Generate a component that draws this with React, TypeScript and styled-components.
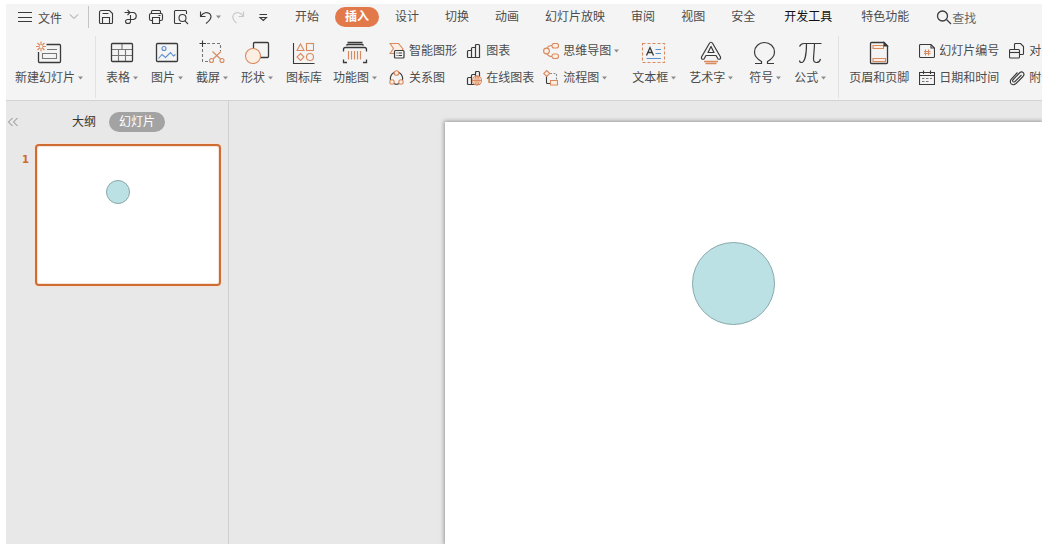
import React, { ReactNode } from "react";
import styled, { createGlobalStyle, css } from "styled-components";

const INK = "#3a3a3a";
const ORANGE = "#d98a5f";
const BLUE = "#5b8fd0";
const LIGHT = "#fdeee4";

const GlobalStyle = createGlobalStyle`
  * { box-sizing: border-box; }
  body {
    margin: 0;
    background: #ffffff;
    font-family: "Liberation Sans", "Noto Sans CJK SC", sans-serif;
    font-size: 12px;
    color: #4c4c4c;
    overflow: hidden;
  }
  button {
    border: 0;
    padding: 0;
    background: none;
    font: inherit;
    color: inherit;
    white-space: nowrap;
    cursor: pointer;
  }
  svg { display: block; flex: none; }
`;

const Shell = styled.div`
  display: flex;
  flex-direction: column;
  height: 100vh;
  padding: 4px 0 0 6px;
  overflow: hidden;
`;

const Header = styled.header`
  flex: none;
  height: 97px;
  background: #f4f4f4;
  border-bottom: 1px solid #d2d2d2;
  overflow: hidden;
`;

const MenuBar = styled.nav`
  display: flex;
  align-items: center;
  height: 26px;
  padding-left: 11px;
`;

const FileButton = styled.button`
  display: flex;
  align-items: center;
  gap: 5px;
  padding-right: 9px;
  border-right: 1px solid #c4c4c4;
  height: 22px;
  flex: none;

  svg:last-child { margin-left: 2px; }
`;

const QuickAccess = styled.div`
  display: flex;
  align-items: center;
  gap: 9px;
  margin-left: 9px;
  flex: none;
`;

const QuickButton = styled.button<{ $withCaret?: boolean }>`
  display: flex;
  align-items: center;
  justify-content: space-between;
  width: ${(p) => (p.$withCaret ? "23px" : "16px")};
  height: 20px;
`;

const TabList = styled.div`
  display: flex;
  align-items: center;
  margin-left: 11px;
  flex: none;
`;

const Tab = styled.button<{ $active?: boolean; $apart?: boolean; $strong?: boolean }>`
  height: 20px;
  line-height: 21px;
  padding: 0 13px;
  flex: none;
  margin-left: ${(p) => (p.$apart ? "3px" : "0")};
  ${(p) => p.$strong && css`color: #111111;`}
  ${(p) =>
    p.$active &&
    css`
      margin: 0 3px;
      padding: 0 10px;
      border-radius: 10px;
      background: #e2794a;
      color: #ffffff;
      font-weight: 700;
    `}
`;

const SearchButton = styled.button`
  display: flex;
  align-items: center;
  margin-left: 14px;
  flex: none;
  color: #666666;
`;

const Ribbon = styled.div`
  display: flex;
  align-items: flex-start;
  height: 70px;
  padding-left: 9px;
`;

const Group = styled.div<{ $gap: number; $before?: number }>`
  display: flex;
  align-items: flex-start;
  flex: none;
  gap: ${(p) => p.$gap}px;
  margin-left: ${(p) => p.$before ?? 0}px;
  padding-top: 10px;
`;

const Divider = styled.span`
  flex: none;
  width: 1px;
  height: 62px;
  margin: 6px 10px 0 12px;
  background: #e2e2e2;
`;

const LargeButton = styled.button`
  display: flex;
  flex-direction: column;
  align-items: center;
  gap: 3px;
  flex: none;
`;

const Label = styled.span`
  display: flex;
  align-items: center;
  gap: 3px;
  line-height: 18px;
`;

const SmallColumn = styled.div`
  display: flex;
  flex-direction: column;
  align-items: flex-start;
  gap: 6px;
  flex: none;
`;

const SmallButton = styled.button`
  display: flex;
  align-items: center;
  gap: 4px;
  height: 21px;
`;

const Workspace = styled.main`
  display: flex;
  flex: 1;
  min-height: 0;
  background: #e8e8e8;
`;

const Sidebar = styled.aside`
  flex: none;
  width: 223px;
  border-right: 1px solid #cfcfcf;
`;

const SidebarHead = styled.div`
  display: flex;
  align-items: center;
  height: 20px;
  margin-top: 11px;
`;

const CollapseButton = styled.button`
  width: 14px;
  margin-right: 42px;
  display: flex;
`;

const PaneTab = styled.button<{ $active?: boolean }>`
  height: 20px;
  line-height: 20px;
  padding: 0 10px;
  color: ${(p) => (p.$active ? "#ffffff" : "#333333")};
  background: ${(p) => (p.$active ? "#a3a3a3" : "transparent")};
  border-radius: 10px;
  margin-right: 3px;
`;

const SlideRow = styled.div`
  display: flex;
  align-items: flex-start;
  margin-top: 12px;
  padding: 0 7px 0 16px;
`;

const SlideNumber = styled.span`
  width: 13px;
  margin-top: 9px;
  line-height: 14px;
  font-family: "DejaVu Sans", sans-serif;
  font-size: 10px;
  font-weight: 700;
  color: #cc6b2c;
`;

const Thumbnail = styled.button`
  position: relative;
  flex: 1;
  height: 142px;
  background: #ffffff;
  border: 2px solid #cf6c33;
  border-radius: 4px;
  box-shadow: 0 0 1px 1px #f6e3d6, inset 0 0 1px 1px #f6e3d6;
`;

const Canvas = styled.section`
  flex: 1;
  min-width: 0;
  display: flex;
  padding: 21px 0 0 216px;
  overflow: hidden;
`;

const Slide = styled.div`
  position: relative;
  flex: 1;
  background: #ffffff;
  box-shadow: 0 0 4px 1px #999999;
`;

const Disc = styled.span<{ $size: number; $left: number; $top: number }>`
  position: absolute;
  left: ${(p) => p.$left}px;
  top: ${(p) => p.$top}px;
  width: ${(p) => p.$size}px;
  height: ${(p) => p.$size}px;
  border: 1px solid #87a9ab;
  border-radius: 50%;
  background: #bce1e4;
`;

type Art = { children: ReactNode };

const BigIcon = ({ children }: Art) => (
  <svg width="28" height="26" viewBox="0 0 28 26" fill="none" stroke={INK} strokeWidth="1.1" aria-hidden="true">
    {children}
  </svg>
);

const Icon = ({ children }: Art) => (
  <svg width="16" height="16" viewBox="0 0 16 16" fill="none" stroke={INK} strokeWidth="1.1" aria-hidden="true">
    {children}
  </svg>
);

const Caret = () => (
  <svg width="5" height="4" viewBox="0 0 5 4" aria-hidden="true">
    <path d="M0 0.5H5L2.5 3.5Z" fill="#8c8c8c" />
  </svg>
);

const Large = ({ label, caret, children }: { label: string; caret?: boolean; children: ReactNode }) => (
  <LargeButton type="button">
    <BigIcon>{children}</BigIcon>
    <Label>
      {label}
      {caret && <Caret />}
    </Label>
  </LargeButton>
);

const Small = ({ label, caret, children }: { label: string; caret?: boolean; children: ReactNode }) => (
  <SmallButton type="button">
    <Icon>{children}</Icon>
    <Label>
      {label}
      {caret && <Caret />}
    </Label>
  </SmallButton>
);

const Bars = () => (
  <path
    strokeWidth="1.2"
    d="M1.500 14.500V8.500Q1.500 7.500 2.500 7.500H5.500M5.500 14.500V5.500Q5.500 4.500 6.500 4.500H9.500M9.500 14.500V2.500Q9.500 1.500 10.500 1.500H12.500Q13.500 1.500 13.500 2.500V14.500ZM1.500 14.500H9.500"
  />
);

const tabs: { name: string; active?: boolean; apart?: boolean; strong?: boolean }[] = [
  { name: "开始" },
  { name: "插入", active: true },
  { name: "设计" },
  { name: "切换" },
  { name: "动画" },
  { name: "幻灯片放映" },
  { name: "审阅" },
  { name: "视图" },
  { name: "安全" },
  { name: "开发工具", apart: true, strong: true },
  { name: "特色功能", apart: true },
];

export default function App() {
  return (
    <Shell>
      <GlobalStyle />
      <Header>
        <MenuBar>
          <FileButton type="button">
            <Icon>
              <path d="M1 3.500H15M1 8.500H15M1 12.500H15" />
            </Icon>
            文件
            <svg width="10" height="6" viewBox="0 0 10 6" fill="none" stroke="#999" aria-hidden="true">
              <path d="M1 0.500L5 4.500L9 0.500" />
            </svg>
          </FileButton>

          <QuickAccess>
            <QuickButton type="button" aria-label="保存">
              <Icon>
                <path d="M1.500 3.500Q1.500 1.500 3.500 1.500H11.500L14.500 4.500V13.500Q14.500 14.500 13.500 14.500H2.500Q1.500 14.500 1.500 13.500ZM4.500 14V8.500H11.500V14M4.500 4.500H10.500" />
              </Icon>
            </QuickButton>
            <QuickButton type="button" aria-label="输出">
              <Icon>
                <path d="M1.500 3.500H10.500A3.600 3.600 0 0 1 10.500 10.500H7.500M4.500 1L7 3.500L4.500 6M7.500 6V12.500Q7.500 14.500 5 14.500Q2.500 14.500 2.500 12.500Q2.500 10.500 5 10.500H7.500" />
              </Icon>
            </QuickButton>
            <QuickButton type="button" aria-label="打印">
              <Icon>
                <path d="M3.500 4V2.500Q3.500 1.500 4.500 1.500H11.500Q12.500 1.500 12.500 2.500V4M4.500 11.500H3Q1.500 11.500 1.500 10V6Q1.500 4.500 3 4.500H13Q14.500 4.500 14.500 6V10Q14.500 11.500 13 11.500H11.500M4.500 8.500H11.500V14.500H4.500ZM10.500 6.500H12.500" />
              </Icon>
            </QuickButton>
            <QuickButton type="button" aria-label="打印预览">
              <Icon>
                <path d="M13.500 5V2.500Q13.500 1.500 12.500 1.500H2.500Q1.500 1.500 1.500 2.500V13.500Q1.500 14.500 2.500 14.500H8M12 11.800L15 15" />
                <circle cx="9.500" cy="9" r="3.500" />
              </Icon>
            </QuickButton>
            <QuickButton type="button" aria-label="撤销" $withCaret>
              <Icon>
                <path d="M2.500 2.500V7.500H7.500M2.500 7.500C5 3.500 9.500 2.500 12 5C14.500 8 12 11.500 8 14.500" />
              </Icon>
              <Caret />
            </QuickButton>
            <QuickButton type="button" aria-label="恢复">
              <Icon>
                <path stroke="#c8c8c8" d="M13.500 2.500V7.500H8.500M13.500 7.500C11 3.500 6.500 2.500 4 5C1.500 8 3.500 11.500 6.500 14" />
              </Icon>
            </QuickButton>
            <QuickButton type="button" aria-label="自定义快速访问">
              <Icon>
                <path d="M4.500 5.500H12M5 8.500L8.300 11.500L11.500 8.500Z" />
              </Icon>
            </QuickButton>
          </QuickAccess>

          <TabList>
            {tabs.map((t) => (
              <Tab key={t.name} type="button" $active={t.active} $apart={t.apart} $strong={t.strong}>
                {t.name}
              </Tab>
            ))}
          </TabList>

          <SearchButton type="button">
            <Icon>
              <circle cx="6.500" cy="7" r="5" strokeWidth="1.300" />
              <path d="M10.500 10.500L15 15" strokeWidth="1.300" />
            </Icon>
            查找
          </SearchButton>
        </MenuBar>

        <Ribbon>
          <Group $gap={0}>
            <Large label="新建幻灯片" caret>
              <path strokeWidth="1.300" d="M11.500 4.500H24.500Q25.500 4.500 25.500 5.500V21.500Q25.500 22.500 24.500 22.500H4.500Q3.500 22.500 3.500 21.500V12" />
              <path stroke="#777" d="M12 9.500H22M7.500 13.500H21.500V18.500H7.500Z" />
              <path stroke={ORANGE} d="M6 1.500V5M6 8V11.500M1 6.500H4.500M7.500 6.500H11M2.500 3L5 5.500M7 7.500L9.500 10M9.500 3L7 5.500M5 7.500L2.500 10" />
            </Large>
          </Group>

          <Divider />

          <Group $gap={13}>
            <Large label="表格" caret>
              <path stroke="#777" d="M4 9.500H24M4 15.500H24M10.500 9.500V15.500M17.500 9.500V21.500M14 4V9.500M10.500 15.500V21.500" />
              <rect x="3.500" y="3.500" width="21" height="18" rx="1" strokeWidth="1.300" />
            </Large>
            <Large label="图片" caret>
              <rect x="3.500" y="3.500" width="21" height="18" rx="1" strokeWidth="1.300" />
              <circle cx="11" cy="8.500" r="2" stroke={BLUE} />
              <path stroke={BLUE} d="M5.500 18.500L9 14.500L12.500 17.500L17.500 12.500L20.500 16L22.500 14.500" />
            </Large>
            <Large label="截屏" caret>
              <path stroke="#777" strokeDasharray="3 2" d="M9 3.500H22.500V11M4.500 9V21.500H11" />
              <path d="M4.500 0.500V7M1.500 3.500H8" />
              <g stroke={ORANGE}>
                <circle cx="13.500" cy="20.500" r="2" />
                <circle cx="24" cy="20.500" r="2" />
                <path d="M15 19L23 11.500M22.500 19L14.500 11.500" />
              </g>
            </Large>
            <Large label="形状" caret>
              <rect x="10.500" y="2.500" width="15" height="15" rx="1" strokeWidth="1.300" />
              <circle cx="10" cy="16" r="7.500" stroke={ORANGE} fill={LIGHT} />
            </Large>
            <Large label="图标库">
              <path d="M3.500 3V23.500H24.500" />
              <g stroke={ORANGE}>
                <path d="M10.500 4L14 10.500H7ZM10.500 13.500L14 17L10.500 20.500L7 17Z" />
                <rect x="16.500" y="3.500" width="7" height="7" />
                <circle cx="20" cy="17" r="3.500" />
              </g>
            </Large>
          </Group>

          <Group $gap={12} $before={11}>
            <Large label="功能图" caret>
              <path
                strokeWidth="1.300"
                d="M6.500 2.500H21.500M5.500 5.500Q6 4.500 7 4.500H21Q22 4.500 22.500 5.500M2.500 11.500V9.500Q2.500 7.500 4.500 7.500H23.500Q25.500 7.500 25.500 9.500V11.500M2.500 19.500V22.500H6M25.500 19.500V22.500H22"
              />
              <path
                stroke={ORANGE}
                strokeWidth="1.200"
                d="M7.500 11V19.500M10.500 11V19.500M13.500 11V19.500M16.500 11V19.500M19.500 11V19.500"
              />
            </Large>
            <SmallColumn>
              <Small label="智能图形">
                <path stroke={ORANGE} fill={LIGHT} d="M1 0.500H9.500L14 6L10 10.500H1L4.500 5.500Z" />
                <rect x="5.500" y="7.500" width="9.500" height="7.500" rx="1" fill="#f4f4f4" strokeWidth="1.200" />
                <path d="M7.500 10H8.500M9.500 10H13M7.500 12.500H8.500M9.500 12.500H13" />
              </Small>
              <Small label="关系图">
                <path d="M5 2.500C2.500 4 1 7 1.500 10M10 2.500C12.500 4 14 7 13.500 10M5 13.500Q7.500 15 10 13.500" />
                <g stroke={ORANGE} fill={LIGHT}>
                  <circle cx="7.500" cy="3" r="2.300" />
                  <circle cx="3" cy="12" r="2.200" />
                  <circle cx="12" cy="12" r="2.200" />
                </g>
              </Small>
            </SmallColumn>
          </Group>

          <Group $gap={9} $before={9}>
            <SmallColumn>
              <Small label="图表">
                <Bars />
              </Small>
              <Small label="在线图表">
                <Bars />
                <g stroke={ORANGE}>
                  <circle cx="11" cy="10.500" r="4.500" fill={LIGHT} />
                  <path d="M6.500 10.500H15.500M11 6V15" />
                  <ellipse cx="11" cy="10.500" rx="2" ry="4.500" />
                </g>
              </Small>
            </SmallColumn>
            <SmallColumn>
              <Small label="思维导图" caret>
                <g stroke={ORANGE}>
                  <path d="M4 5.500Q5 2.500 9 2.500M4 10.500Q5 13.500 9 13.500" />
                  <circle cx="3.500" cy="8" r="2.900" fill={LIGHT} />
                  <rect x="9" y="0.500" width="6.500" height="4.500" rx="2" fill={LIGHT} />
                  <rect x="9" y="11" width="6.500" height="4.500" rx="2" fill={LIGHT} />
                </g>
              </Small>
              <Small label="流程图" caret>
                <path d="M3.500 6V12.500Q3.500 13.500 4.500 13.500H7" />
                <path stroke="#888" strokeDasharray="2 1.500" d="M7 3.500H13.500V10" />
                <path stroke={ORANGE} fill={LIGHT} d="M3.700 0.500L6.700 3.500L3.700 6.500L0.700 3.500ZM7.500 10.500H14.500V15H7.500Z" />
              </Small>
            </SmallColumn>
          </Group>

          <Group $gap={13} $before={13}>
            <Large label="文本框" caret>
              <rect x="2.500" y="3.500" width="22" height="19" stroke={ORANGE} strokeDasharray="3 2" />
              <path strokeWidth="1.300" d="M6.500 15.500L10 7.500L13.500 15.500M7.700 12.500H12.300" />
              <path stroke={BLUE} d="M15.500 9.500H21M15.500 13.500H21M6.500 18.500H21" />
            </Large>
            <Large label="艺术字" caret>
              <path
                strokeLinejoin="round"
                strokeWidth="1.200"
                d="M12 4Q14 0.500 16 4L23.500 17Q24 20 21 19L19 15.500H9L7 19Q4 20 4.500 17ZM11 12.500H17L14 6.500Z"
              />
              <path stroke={ORANGE} strokeWidth="1.300" d="M7 21.500H21M8.500 23.500H19.500" />
            </Large>
          </Group>
          <Group $gap={13} $before={16}>
            <Large label="符号" caret>
              <path strokeWidth="1.200" d="M4 23.500H10.500V21.500C6 19 3.500 16 3.500 12A10 9.500 0 0 1 23.500 12C23.500 16 21 19 16.500 21.500V23.500H23" />
            </Large>
            <Large label="公式" caret>
              <path
                strokeWidth="1.200"
                d="M3.500 6.500Q5 3.500 8 3.500H25.500M10.500 3.500C10.500 13 9 22.500 5.500 22.500Q3.500 22.500 3.500 20.500M18.500 3.500C18.500 9 17.500 15 17.500 19Q17.500 22.500 20.500 22.500Q23.500 22.500 24.500 19"
              />
            </Large>
          </Group>

          <Divider />

          <Group $gap={10}>
            <Large label="页眉和页脚">
              <path strokeWidth="1.300" d="M5.500 3.500Q5.500 2.500 6.500 2.500H19L22.500 6V22.500Q22.500 23.500 21.500 23.500H6.500Q5.500 23.500 5.500 22.500Z" />
              <path stroke={ORANGE} fill={LIGHT} d="M8 5.500H18.500V8.500H8ZM8 18.500H20.500V21.500H8Z" />
              <path fill={INK} d="M19 2.500L22.500 6H19Z" />
            </Large>
            <SmallColumn>
              <Small label="幻灯片编号">
                <path d="M0.500 2.500Q0.500 1.500 1.500 1.500H12L15.500 5V13.500Q15.500 14.500 14.500 14.500H1.500Q0.500 14.500 0.500 13.500ZM12 1.500V5H15.500" />
                <path stroke={ORANGE} d="M6.500 6.500V12.500M9.500 6.500V12.500M5 8.500H11.500M5 10.500H11.500" />
              </Small>
              <Small label="日期和时间">
                <path d="M0.500 2.500H15.500V14.500H0.500ZM0.500 5.500H15.500M4.500 0.500V4M11.500 0.500V4" />
                <path stroke="#777" d="M3 8.500H5.500M7 8.500H9.500M11 8.500H13M3 11.500H5.500M7 11.500H9.500" />
              </Small>
            </SmallColumn>
            <SmallColumn>
              <Small label="对象">
                <path d="M5.500 6V1.500Q5.500 0.500 6.500 0.500H11.500L14.500 3.500V10.500Q14.500 11.500 13.500 11.500H11" />
                <rect x="0.500" y="6.500" width="10" height="8.500" rx="1" />
                <path d="M1 9.500H10" />
              </Small>
              <Small label="附件">
                <path
                  strokeWidth="1.100"
                  d="M12.500 5L6 11.500Q4.500 12.500 3.800 11.500Q3.200 10.500 4.200 9.500L10.500 3Q12.500 1 14.300 2.700Q15.800 4.500 14 6.500L7 13.500Q4.500 15.800 2.200 13.800Q0.200 11.500 2.500 8.800L8.500 2.500"
                />
              </Small>
            </SmallColumn>
          </Group>
        </Ribbon>
      </Header>

      <Workspace>
        <Sidebar>
          <SidebarHead>
            <CollapseButton type="button" aria-label="收起窗格">
              <svg width="14" height="10" viewBox="0 0 14 10" fill="none" stroke="#888" aria-hidden="true">
                <path d="M6.500 1L2.500 5L6.500 9M11.500 1L7.500 5L11.500 9" />
              </svg>
            </CollapseButton>
            <PaneTab type="button">大纲</PaneTab>
            <PaneTab type="button" $active>
              幻灯片
            </PaneTab>
          </SidebarHead>
          <SlideRow>
            <SlideNumber>1</SlideNumber>
            <Thumbnail type="button" aria-label="幻灯片 1">
              <Disc $size={24} $left={69} $top={34} />
            </Thumbnail>
          </SlideRow>
        </Sidebar>
        <Canvas>
          <Slide>
            <Disc $size={83} $left={247} $top={120} />
          </Slide>
        </Canvas>
      </Workspace>
    </Shell>
  );
}
